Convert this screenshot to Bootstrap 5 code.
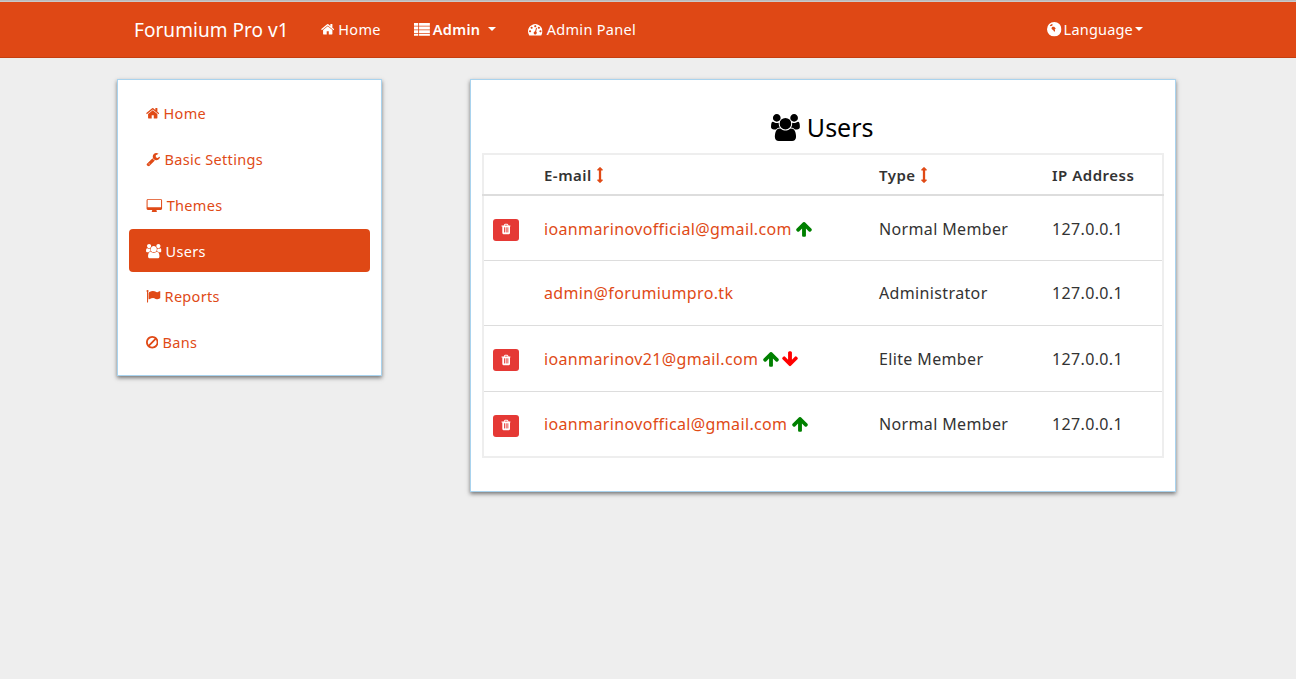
<!DOCTYPE html>
<html lang="en">
<head>
<meta charset="utf-8">
<title>Forumium Pro v1</title>
<link href="https://cdn.jsdelivr.net/npm/bootstrap@5.3.0/dist/css/bootstrap.min.css" rel="stylesheet">
<style>
body{background:#eee;font-family:"Noto Sans","Open Sans",sans-serif;font-size:15px;color:#333;border-top:1px solid #bbb;min-height:678px}
.ico{height:1em;width:1em;fill:currentColor;vertical-align:-.125em}
.ico-home{width:.93em}.ico-users{width:1.07em}.ico-desk{width:1.15em}.ico-ban{width:.86em}.ico-trash{width:.79em}.ico-sort{width:.43em}.ico-list{width:1.1em}
.topbar{background:#df4815;border-bottom:1px solid #c53f10;height:57px;padding:0;border-top:1px solid #c9c9c9}
.topwrap{width:1062px;margin-left:117px;padding:0 20px 0 17px;height:100%}
.topbar .navbar-brand{color:#fff;font-size:19px;letter-spacing:.05px;margin-right:16px;padding:2px 0 0}
.topbar .navbar-nav .nav-link{color:#fff;font-size:14.5px;letter-spacing:.3px;padding:0 16px;line-height:53px}
.topbar .navbar-nav .nav-link.strong{font-weight:600}
.topbar .navbar-nav .nav-link.snug{letter-spacing:.2px}
.ico-globe{margin-right:-2px}
.ico-list{margin-left:1px;margin-right:-1px}
.dropdown-toggle.snug::after{margin-left:2px}
.pagewrap{margin:21px 0 0 117px;gap:88px;align-items:flex-start}
.sidebox,.mainbox{background:#fff;border:1px solid #a9d3ee;box-shadow:0 2px 4px rgba(0,0,0,.5)}
.sidebox{width:265px;height:297px;padding:11px}
.sidebox .nav-link{color:#e04a16;font-size:14.5px;letter-spacing:.3px;height:43px;padding:0 17px;line-height:45px;border-radius:4px;margin-bottom:3px}
.sidebox .nav-link.active{background:#df4815;color:#fff;margin-bottom:2px}
.mainbox{width:706px;height:413px;padding:0 12px 0 11px}
.pagetitle{font-size:25px;line-height:30px;font-weight:400;color:#000;text-align:center;margin:32px 0 11px}
.pagetitle .ico{font-size:27px;vertical-align:-4px}
.usertable{width:680px;table-layout:fixed;border:2px solid #eee;margin:0;font-size:16px;letter-spacing:.36px}
.usertable th,.usertable td{padding:2px 9px 0;border:0;border-bottom:1px solid #ddd;vertical-align:middle;color:#333;box-shadow:none;white-space:nowrap}
.usertable th{height:41px;border-bottom:2px solid #ddd;font-size:15px;font-weight:600;letter-spacing:.5px}
.usertable td{height:65px}
.usertable tr.wide-row td{height:66px}
.usertable tr:last-child td{border-bottom:0}
.usertable td.trashcell{padding-top:4px}
.usertable tr.lift-row td:not(.trashcell){padding-top:0}
.usertable a{color:#e04a16;text-decoration:none}
.usertable .sorter{color:#e04a16;font-size:16px}
.trashbtn{background:#e53935;border:0;border-radius:3px;color:#fff;width:26px;height:22px;padding:0;font-size:12px;line-height:20px;display:block}
.trashbtn:hover{background:#e53935;color:#fff}
.up,.down{font-size:18px;vertical-align:-3px}
.up{color:#008000;margin-left:-1px}.down{color:#f00;margin-left:-3px}
</style>
</head>
<body>
<svg width="0" height="0" class="d-block">
<symbol id="i-home" viewBox="0 0 1664 1792"><path d="M1408 992v480q0 26-19 45t-45 19h-384v-384h-256v384h-384q-26 0-45-19t-19-45v-480q0-1 .5-3t.5-3l575-474 575 474q1 2 1 6zm223-69l-62 74q-8 9-21 11h-3q-13 0-21-7l-692-577-692 577q-12 8-24 7-13-2-21-11l-62-74q-8-10-7-23.5t11-21.5l719-599q32-26 76-26t76 26l244 204v-195q0-14 9-23t23-9h192q14 0 23 9t9 23v408l219 182q10 8 11 21.5t-7 23.5z"/></symbol>
<symbol id="i-users" viewBox="0 0 1920 1792"><path d="M593 896q-162 5-265 128h-134q-82 0-138-40.500t-56-118.500q0-353 124-353 6 0 43.500 21t97.500 42.500 119 21.500q67 0 133-23-5 37-5 66 0 139 81 256zm1071 637q0 120-73 189.500t-194 69.500h-874q-121 0-194-69.500t-73-189.500q0-53 3.500-103.500t14-109 26.500-108.500 43-97.500 62-81 85.500-53.500 111.500-20q10 0 43 21.500t73 48 107 48 135 21.500 135-21.500 107-48 73-48 43-21.500q61 0 111.500 20t85.500 53.500 62 81 43 97.500 26.500 108.500 14 109 3.500 103.500zm-1024-1277q0 106-75 181t-181 75-181-75-75-181 75-181 181-75 181 75 75 181zm704 384q0 159-112.500 271.500t-271.500 112.500-271.500-112.500-112.500-271.500 112.500-271.500 271.500-112.500 271.500 112.500 112.500 271.500zm576 225q0 78-56 118.500t-138 40.500h-134q-103-123-265-128 81-117 81-256 0-29-5-66 66 23 133 23 59 0 119-21.500t97.500-42.500 43.500-21q124 0 124 353zm-128-609q0 106-75 181t-181 75-181-75-75-181 75-181 181-75 181 75 75 181z"/></symbol>
<symbol id="i-wrench" viewBox="0 0 1792 1792"><path d="M448 1472q0-26-19-45t-45-19-45 19-19 45 19 45 45 19 45-19 19-45zm644-420l-682 682q-37 37-90 37-52 0-91-37l-106-108q-38-36-38-90 0-53 38-91l681-681q39 98 114.500 173.500t173.500 114.500zm634-435q0 39-23 106-47 134-164.500 217.500t-258.500 83.500q-185 0-316.500-131.500t-131.500-316.500 131.500-316.500 316.500-131.500q58 0 121.500 16.500t107.500 46.500q16 11 16 28t-16 28l-293 169v224l193 107q5-3 79-48.500t135.500-81 70.500-35.500q15 0 23.500 10t8.500 25z"/></symbol>
<symbol id="i-desktop" viewBox="0 -128 1920 1792"><path fill-rule="evenodd" d="M160 0h1600q66 0 113 47t47 113v1024q0 66-47 113t-113 47h-544q0 37 16 77.500t32 71 16 43.500q0 26-19 45t-45 19h-512q-26 0-45-19t-19-45q0-14 16-44t32-70 16-78h-544q-66 0-113-47t-47-113v-1024q0-66 47-113t113-47zm-32 128v864q0 13 9.500 22.500t22.500 9.500h1600q13 0 22.500-9.500t9.500-22.500v-864q0-13-9.500-22.500t-22.500-9.500h-1600q-13 0-22.500 9.500t-9.500 22.500z"/></symbol>
<symbol id="i-flag" viewBox="0 0 1792 1792"><path d="M320 256q0 72-64 110v1266q0 13-9.500 22.500t-22.500 9.500h-64q-13 0-22.500-9.500t-9.500-22.500v-1266q-64-38-64-110 0-53 37.500-90.500t90.500-37.500 90.500 37.500 37.500 90.500zm1472 64v763q0 25-12.500 38.500t-39.500 27.500q-215 116-369 116-61 0-123.500-22t-108.500-48-115.500-48-142.500-22q-192 0-464 146-17 9-33 9-26 0-45-19t-19-45v-742q0-32 31-55 21-14 79-43 236-120 421-120 107 0 200 29t219 88q38 19 88 19 54 0 117.500-21t110-47 88-47 54.500-21q26 0 45 19t19 45z"/></symbol>
<symbol id="i-ban" viewBox="128 0 1536 1792"><path d="M1440 893q0-161-87-295l-754 753q137 89 297 89 111 0 211.500-43.500t173.500-116.500 116-174.500 43-212.500zm-999 299l755-754q-135-91-300-91-148 0-273 73t-198 199-73 274q0 162 89 299zm1223-299q0 157-61 300t-163.500 246-245 164-298.500 61-298.500-61-245-164-163.500-246-61-300 61-299.500 163.500-245.500 245-164 298.500-61 298.500 61 245 164 163.500 245.500 61 299.500z"/></symbol>
<symbol id="i-trash" viewBox="128 0 1408 1792"><path d="M704 1376v-704q0-14-9-23t-23-9h-64q-14 0-23 9t-9 23v704q0 14 9 23t23 9h64q14 0 23-9t9-23zm256 0v-704q0-14-9-23t-23-9h-64q-14 0-23 9t-9 23v704q0 14 9 23t23 9h64q14 0 23-9t9-23zm256 0v-704q0-14-9-23t-23-9h-64q-14 0-23 9t-9 23v704q0 14 9 23t23 9h64q14 0 23-9t9-23zm-544-992h448l-48-117q-7-9-17-11h-317q-10 2-17 11zm928 32v64q0 14-9 23t-23 9h-96v948q0 83-47 143.500t-113 60.500h-832q-66 0-113-58.500t-47-141.500v-952h-96q-14 0-23-9t-9-23v-64q0-14 9-23t23-9h309l70-167q15-37 54-63t79-26h320q40 0 79 26t54 63l70 167h309q14 0 23 9t9 23z"/></symbol>
<symbol id="i-up" viewBox="0 0 1792 1792"><path d="M1675 971q0 51-37 90l-75 75q-38 38-91 38-54 0-90-38l-294-293v704q0 52-37.500 84.500t-90.500 32.500h-128q-53 0-90.500-32.500t-37.500-84.500v-704l-294 293q-36 38-90 38t-90-38l-75-75q-38-38-38-90 0-53 38-91l651-651q35-37 90-37 54 0 91 37l651 651q37 39 37 91z"/></symbol>
<symbol id="i-down" viewBox="0 0 1792 1792"><path d="M1675 832q0 53-37 90l-651 652q-39 37-91 37-53 0-90-37l-651-652q-38-36-38-90 0-53 38-91l74-75q39-37 91-37 53 0 90 37l294 294v-704q0-52 38-90t90-38h128q52 0 90 38t38 90v704l294-294q37-37 90-37 52 0 91 37l75 75q37 39 37 91z"/></symbol>
<symbol id="i-sort" viewBox="256 0 768 1792"><path d="M1024 320q0 26-19 45t-45 19h-128v1024h128q26 0 45 19t19 45-19 45l-256 256q-19 19-45 19t-45-19l-256-256q-19-19-19-45t19-45 45-19h128v-1024h-128q-26 0-45-19t-19-45 19-45l256-256q19-19 45-19t45 19l256 256q19 19 19 45z"/></symbol>
<symbol id="i-list" viewBox="0 0 1056 960"><path d="M0 64h280v190H0zm336 0h720v190H336zM0 304h280v190H0zm336 0h720v190H336zM0 544h280v190H0zm336 0h720v190H336zM0 784h280v130H0zm336 0h720v130H336z"/></symbol>
<symbol id="i-gauge" viewBox="0 0 1792 1792"><path d="M384 1152q0-53-37.500-90.500t-90.500-37.500-90.500 37.500-37.500 90.500 37.500 90.500 90.500 37.500 90.500-37.500 37.500-90.500zm192-448q0-53-37.500-90.500t-90.500-37.500-90.500 37.500-37.500 90.500 37.500 90.500 90.500 37.500 90.500-37.500 37.500-90.500zm428 481l101-382q6-26-7.500-48.500t-38.500-29.500-48 6.500-30 39.500l-101 382q-60 5-107 43.500t-63 98.500q-20 77 20 146t117 89 146-20 89-117q16-60-6-117t-72-91zm660-33q0-53-37.500-90.500t-90.500-37.500-90.500 37.500-37.500 90.500 37.500 90.500 90.500 37.500 90.500-37.500 37.500-90.500zm-640-640q0-53-37.500-90.500t-90.500-37.500-90.500 37.500-37.500 90.500 37.500 90.500 90.500 37.500 90.500-37.500 37.500-90.500zm448 192q0-53-37.500-90.500t-90.500-37.500-90.500 37.500-37.500 90.500 37.500 90.500 90.500 37.500 90.500-37.500 37.500-90.500zm320 448q0 261-141 483-19 29-54 29h-1402q-35 0-54-29-141-221-141-483 0-182 71-348t191-286 286-191 348-71 348 71 286 191 191 286 71 348z"/></symbol>
<symbol id="i-globe" viewBox="128 128 1536 1536"><path fill-rule="evenodd" d="M896 128a768 768 0 1 1 0 1536a768 768 0 0 1 0-1536zM640 340c-90 40-170 100-230 180l120 60 130-60 90-110zM780 640c-100 0-180 70-170 170 10 90 110 110 170 170l70 130 80 60 60-110-50-130 110-90-60-110-110-90z"/></symbol>
</svg>

<nav class="navbar navbar-expand topbar">
  <div class="d-flex align-items-center topwrap">
    <a class="navbar-brand" href="#">Forumium Pro v1</a>
    <ul class="navbar-nav me-auto">
      <li class="nav-item"><a class="nav-link" href="#"><svg class="ico ico-home"><use href="#i-home"/></svg> Home</a></li>
      <li class="nav-item dropdown"><a class="nav-link strong dropdown-toggle" href="#" data-bs-toggle="dropdown"><svg class="ico ico-list"><use href="#i-list"/></svg> Admin </a></li>
      <li class="nav-item"><a class="nav-link" href="#"><svg class="ico"><use href="#i-gauge"/></svg> Admin Panel</a></li>
    </ul>
    <ul class="navbar-nav">
      <li class="nav-item dropdown"><a class="nav-link dropdown-toggle snug" href="#" data-bs-toggle="dropdown"><svg class="ico ico-globe"><use href="#i-globe"/></svg> Language</a></li>
    </ul>
  </div>
</nav>

<div class="d-flex pagewrap">
  <aside class="sidebox">
    <ul class="nav nav-pills flex-column">
      <li class="nav-item"><a class="nav-link" href="#"><svg class="ico ico-home"><use href="#i-home"/></svg> Home</a></li>
      <li class="nav-item"><a class="nav-link" href="#"><svg class="ico"><use href="#i-wrench"/></svg> Basic Settings</a></li>
      <li class="nav-item"><a class="nav-link" href="#"><svg class="ico ico-desk"><use href="#i-desktop"/></svg> Themes</a></li>
      <li class="nav-item"><a class="nav-link active" href="#"><svg class="ico ico-users"><use href="#i-users"/></svg> Users</a></li>
      <li class="nav-item"><a class="nav-link" href="#"><svg class="ico"><use href="#i-flag"/></svg> Reports</a></li>
      <li class="nav-item"><a class="nav-link" href="#"><svg class="ico ico-ban"><use href="#i-ban"/></svg> Bans</a></li>
    </ul>
  </aside>
  <main class="mainbox">
    <h1 class="pagetitle"><svg class="ico ico-users"><use href="#i-users"/></svg> Users</h1>
    <table class="table usertable">
      <colgroup><col style="width:52px"><col style="width:335px"><col style="width:173px"><col style="width:120px"></colgroup>
      <thead>
        <tr><th></th><th>E-mail <svg class="ico ico-sort sorter"><use href="#i-sort"/></svg></th><th>Type <svg class="ico ico-sort sorter"><use href="#i-sort"/></svg></th><th>IP Address</th></tr>
      </thead>
      <tbody>
        <tr><td class="trashcell"><button class="btn trashbtn" type="button"><svg class="ico ico-trash"><use href="#i-trash"/></svg></button></td><td><a href="#">ioanmarinovofficial@gmail.com</a> <svg class="ico up"><use href="#i-up"/></svg></td><td>Normal Member</td><td>127.0.0.1</td></tr>
        <tr class="lift-row"><td></td><td><a href="#">admin@forumiumpro.tk</a></td><td>Administrator</td><td>127.0.0.1</td></tr>
        <tr class="wide-row"><td class="trashcell"><button class="btn trashbtn" type="button"><svg class="ico ico-trash"><use href="#i-trash"/></svg></button></td><td><a href="#">ioanmarinov21@gmail.com</a> <svg class="ico up"><use href="#i-up"/></svg> <svg class="ico down"><use href="#i-down"/></svg></td><td>Elite Member</td><td>127.0.0.1</td></tr>
        <tr class="wide-row lift-row"><td class="trashcell"><button class="btn trashbtn" type="button"><svg class="ico ico-trash"><use href="#i-trash"/></svg></button></td><td><a href="#">ioanmarinovoffical@gmail.com</a> <svg class="ico up"><use href="#i-up"/></svg></td><td>Normal Member</td><td>127.0.0.1</td></tr>
      </tbody>
    </table>
  </main>
</div>
<script src="https://cdn.jsdelivr.net/npm/bootstrap@5.3.0/dist/js/bootstrap.bundle.min.js"></script>
</body>
</html>
